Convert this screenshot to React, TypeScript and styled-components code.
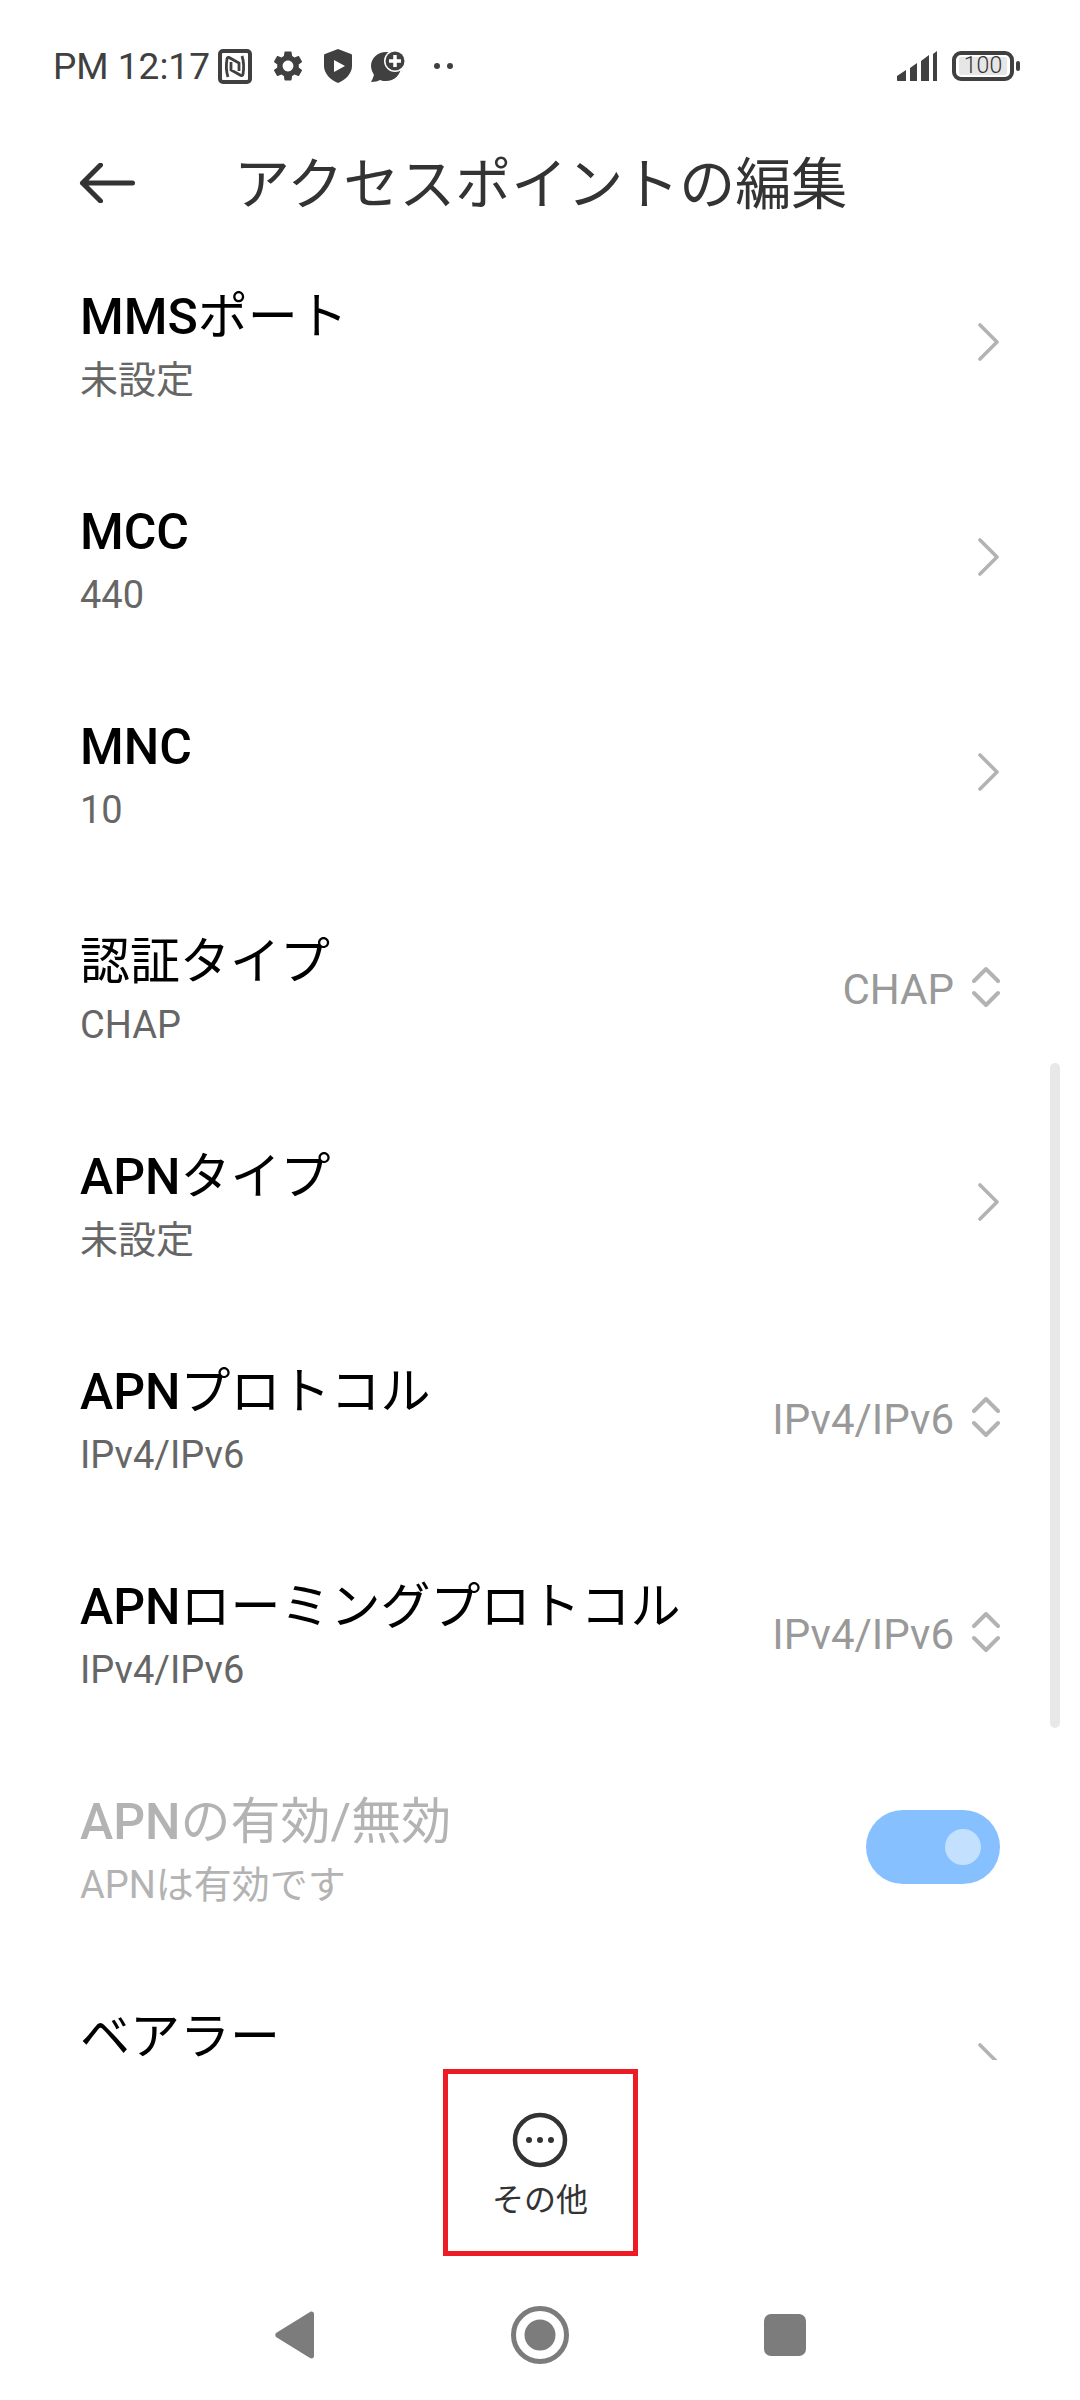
import React from 'react'
import styled, { createGlobalStyle } from 'styled-components'
import { MdSettings } from 'react-icons/md'

const sans = `Roboto, "Noto Sans CJK JP", sans-serif`

const GlobalStyle = createGlobalStyle`
  html, body {
    margin: 0;
    padding: 0;
    background: #fff;
  }
  body {
    font-family: ${sans};
  }
`

const Screen = styled.div`
  width: 1080px;
  height: 2400px;
  display: flex;
  flex-direction: column;
  overflow: hidden;
  background: #fff;
`

const StatusBar = styled.div`
  height: 132px;
  flex: none;
  box-sizing: border-box;
  padding: 0 60px 0 53px;
  display: flex;
  align-items: center;
  color: #404040;
`

const Clock = styled.span`
  font-size: 37px;
  line-height: 1;
  margin-right: 8px;
`

const StatusIcons = styled.div`
  display: flex;
  align-items: center;
  gap: 18px;
  flex: 1;
`

const StatusRight = styled.div`
  display: flex;
  align-items: center;
  gap: 15px;
`

const BatteryBody = styled.div`
  width: 62px;
  height: 30px;
  box-sizing: border-box;
  border: 4px solid #404040;
  border-radius: 9px;
  padding: 2px 3px;
  display: flex;
`

const BatteryLevel = styled.div`
  flex: 1;
  background: #e6e6e6;
  border-radius: 2px;
  font-size: 23px;
  font-weight: 300;
  line-height: 18px;
  text-align: center;
  color: #333;
`

const BatteryTip = styled.div`
  width: 4px;
  height: 10px;
  margin-left: 2px;
  border-radius: 2px;
  background: #404040;
`

const Battery = styled.div`
  display: flex;
  align-items: center;
`

const Header = styled.div`
  height: 102px;
  flex: none;
  box-sizing: border-box;
  padding-left: 79px;
  display: flex;
  align-items: center;
`

const Title = styled.h1`
  margin: 4px 0 0 98px;
  font-size: 56px;
  font-weight: 400;
  line-height: 1;
  color: #333;
`

const Content = styled.div`
  flex: 1;
  min-height: 0;
  position: relative;
  overflow: hidden;
`

const ScrollThumb = styled.div`
  position: absolute;
  top: 829px;
  right: 20px;
  width: 10px;
  height: 665px;
  border-radius: 5px;
  background: #e8e8e8;
`

const Row = styled.div`
  height: 215px;
  box-sizing: border-box;
  padding: 0 80px;
  display: flex;
  align-items: center;
  justify-content: space-between;
  flex: none;
`

const RowText = styled.div<{ $titleOnly?: boolean }>`
  display: flex;
  flex-direction: column;
  gap: 17px;
  padding-top: 13px;
  padding-bottom: ${p => (p.$titleOnly ? '63px' : '0')};
`

const RowTitle = styled.div<{ $disabled?: boolean }>`
  font-size: 50px;
  line-height: 46px;
  color: ${p => (p.$disabled ? '#b3b3b3' : '#000')};
  b {
    font-weight: 500;
  }
`

const RowSub = styled.div<{ $disabled?: boolean }>`
  font-size: 38px;
  line-height: 46px;
  color: ${p => (p.$disabled ? '#b3b3b3' : '#666')};
`

const RowValue = styled.div`
  display: flex;
  align-items: center;
  gap: 18px;
`

const ValueText = styled.span`
  font-size: 42px;
  line-height: 50px;
  margin-top: 7px;
  color: #999;
`

const Switch = styled.div`
  width: 134px;
  height: 74px;
  border-radius: 37px;
  background: #87c0ff;
  box-sizing: border-box;
  padding-right: 19px;
  display: flex;
  align-items: center;
  justify-content: flex-end;
`

const SwitchKnob = styled.div`
  width: 36px;
  height: 36px;
  border-radius: 50%;
  background: #c3e0ff;
`

const Footer = styled.div`
  height: 340px;
  flex: none;
  box-sizing: border-box;
  padding-top: 9px;
  background: #fff;
  display: flex;
  flex-direction: column;
  align-items: center;
`

const MoreButton = styled.div`
  width: 195px;
  height: 187px;
  box-sizing: border-box;
  border: 5px solid #ed1c24;
  padding-top: 38px;
  display: flex;
  flex-direction: column;
  align-items: center;
  gap: 12px;
`

const MoreLabel = styled.span`
  font-size: 32px;
  line-height: 40px;
  color: #333;
`

const NavBar = styled.div`
  margin-top: 50px;
  width: 100%;
  box-sizing: border-box;
  padding: 0 274px 0 275px;
  display: flex;
  align-items: center;
  justify-content: space-between;
`

const DotsSvg = styled.svg`
  margin-left: 9px;
`

const NfcIcon = () => (
  <svg width="34" height="35" viewBox="0 0 34 35" fill="none" stroke="#404040">
    <rect x="2" y="2" width="30" height="31" rx="3" strokeWidth="4" />
    <path d="M10 28c-2-6-2-12-1-18 0-2 2-2 3-1l9 5v8M24 7c2 6 2 12 1 18 0 2-2 2-3 1l-9-5v-8" strokeWidth="2.8" />
  </svg>
)

const ShieldIcon = () => (
  <svg width="28" height="34" viewBox="0 0 28 34">
    <path
      fill="#404040"
      fillRule="evenodd"
      d="M14 0l13 5c1 .4 1 1 1 2v10c0 8-7 14-14 17C7 31 0 25 0 17V7c0-1 0-1.600 1-2zM10 11v12l11-6z"
    />
  </svg>
)

const BubblePlusIcon = () => (
  <svg width="36" height="33" viewBox="0 0 36 33">
    <path fill="#404040" d="M16 2C8 2 1 8 1 16c0 4 2 7 3 9-1 3-2 5-3 7 4 0 7-1 9-2 2 1 4 1 6 1 8 0 15-6 15-15 0-8-7-14-15-14z" />
    <circle cx="25" cy="11" r="11" fill="#fff" />
    <circle cx="25" cy="11" r="9.500" fill="#404040" />
    <path d="M25 5v12M19 11h12" stroke="#fff" strokeWidth="3.500" />
  </svg>
)

const DotsIcon = () => (
  <DotsSvg width="20" height="8" viewBox="0 0 20 8">
    <circle cx="4" cy="4" r="3" fill="#404040" />
    <circle cx="17" cy="4" r="3" fill="#404040" />
  </DotsSvg>
)

const SignalIcon = () => (
  <svg width="40" height="30" viewBox="0 0 40 30">
    <path
      fill="#404040"
      d="M0 25l9-6v11H1c-.6 0-1-.4-1-1zM13 17l7-5v18h-7zM24 10l8-6v26h-8zM36 3l4-3v30h-4z"
    />
  </svg>
)

const BackArrow = () => (
  <svg width="57" height="40" viewBox="0 0 56 40" fill="none" stroke="#333" strokeWidth="5" strokeLinecap="round" strokeLinejoin="round">
    <path d="M53 20H3M21 2L3 20l18 18" />
  </svg>
)

const ChevronRight = () => (
  <svg width="22" height="38" viewBox="0 0 22 38" fill="none" stroke="#b3b3b3" strokeWidth="3.6" strokeLinecap="round" strokeLinejoin="round">
    <path d="M2 2l17 17L2 36" />
  </svg>
)

const UpDown = () => (
  <svg width="28" height="42" viewBox="0 0 28 42" fill="none" stroke="#b3b3b3" strokeWidth="4" strokeLinecap="round" strokeLinejoin="round">
    <path d="M2 15L14 3l12 12M2 27l12 12 12-12" />
  </svg>
)

const MoreIcon = () => (
  <svg width="56" height="56" viewBox="0 0 56 56">
    <circle cx="28" cy="28" r="25" fill="none" stroke="#333" strokeWidth="4.500" />
    <circle cx="17" cy="28" r="3" fill="#333" />
    <circle cx="28" cy="28" r="3" fill="#333" />
    <circle cx="39" cy="28" r="3" fill="#333" />
  </svg>
)

const NavBack = () => (
  <svg width="40" height="48" viewBox="0 0 40 48">
    <path fill="#7c7c7c" d="M1 22L35 1c2-1 4 0 4 2v42c0 2-2 3-4 2L1 26c-1-1-1-3 0-4z" />
  </svg>
)

const NavHome = () => (
  <svg width="58" height="58" viewBox="0 0 58 58">
    <circle cx="29" cy="29" r="26.500" fill="none" stroke="#7c7c7c" strokeWidth="5" />
    <circle cx="29" cy="29" r="15.500" fill="#7c7c7c" />
  </svg>
)

const NavRecent = () => (
  <svg width="42" height="42" viewBox="0 0 42 42">
    <rect width="42" height="42" rx="7" fill="#7c7c7c" />
  </svg>
)

type Item = {
  latin?: string
  title: string
  sub: string
  value?: string
}

const items: Item[] = [
  { latin: 'MMS', title: 'ポート', sub: '未設定' },
  { latin: 'MCC', title: '', sub: '440' },
  { latin: 'MNC', title: '', sub: '10' },
  { title: '認証タイプ', sub: 'CHAP', value: 'CHAP' },
  { latin: 'APN', title: 'タイプ', sub: '未設定' },
  { latin: 'APN', title: 'プロトコル', sub: 'IPv4/IPv6', value: 'IPv4/IPv6' },
  { latin: 'APN', title: 'ローミングプロトコル', sub: 'IPv4/IPv6', value: 'IPv4/IPv6' },
]

const App = () => {
  return (
    <Screen>
      <GlobalStyle />
      <StatusBar>
        <Clock>PM 12:17</Clock>
        <StatusIcons>
          <NfcIcon />
          <MdSettings size={36} color="#404040" />
          <ShieldIcon />
          <BubblePlusIcon />
          <DotsIcon />
        </StatusIcons>
        <StatusRight>
          <SignalIcon />
          <Battery>
            <BatteryBody>
              <BatteryLevel>100</BatteryLevel>
            </BatteryBody>
            <BatteryTip />
          </Battery>
        </StatusRight>
      </StatusBar>
      <Header>
        <BackArrow />
        <Title>アクセスポイントの編集</Title>
      </Header>
      <Content>
        {items.map(item => (
          <Row key={item.latin + item.title}>
            <RowText>
              <RowTitle>
                {item.latin && <b>{item.latin}</b>}
                {item.title}
              </RowTitle>
              <RowSub>{item.sub}</RowSub>
            </RowText>
            {item.value ? (
              <RowValue>
                <ValueText>{item.value}</ValueText>
                <UpDown />
              </RowValue>
            ) : (
              <ChevronRight />
            )}
          </Row>
        ))}
        <Row>
          <RowText>
            <RowTitle $disabled>
              <b>APN</b>の有効/無効
            </RowTitle>
            <RowSub $disabled>APNは有効です</RowSub>
          </RowText>
          <Switch>
            <SwitchKnob />
          </Switch>
        </Row>
        <Row>
          <RowText $titleOnly>
            <RowTitle>ベアラー</RowTitle>
          </RowText>
          <ChevronRight />
        </Row>
        <ScrollThumb />
      </Content>
      <Footer>
        <MoreButton>
          <MoreIcon />
          <MoreLabel>その他</MoreLabel>
        </MoreButton>
        <NavBar>
          <NavBack />
          <NavHome />
          <NavRecent />
        </NavBar>
      </Footer>
    </Screen>
  )
}

export default App
